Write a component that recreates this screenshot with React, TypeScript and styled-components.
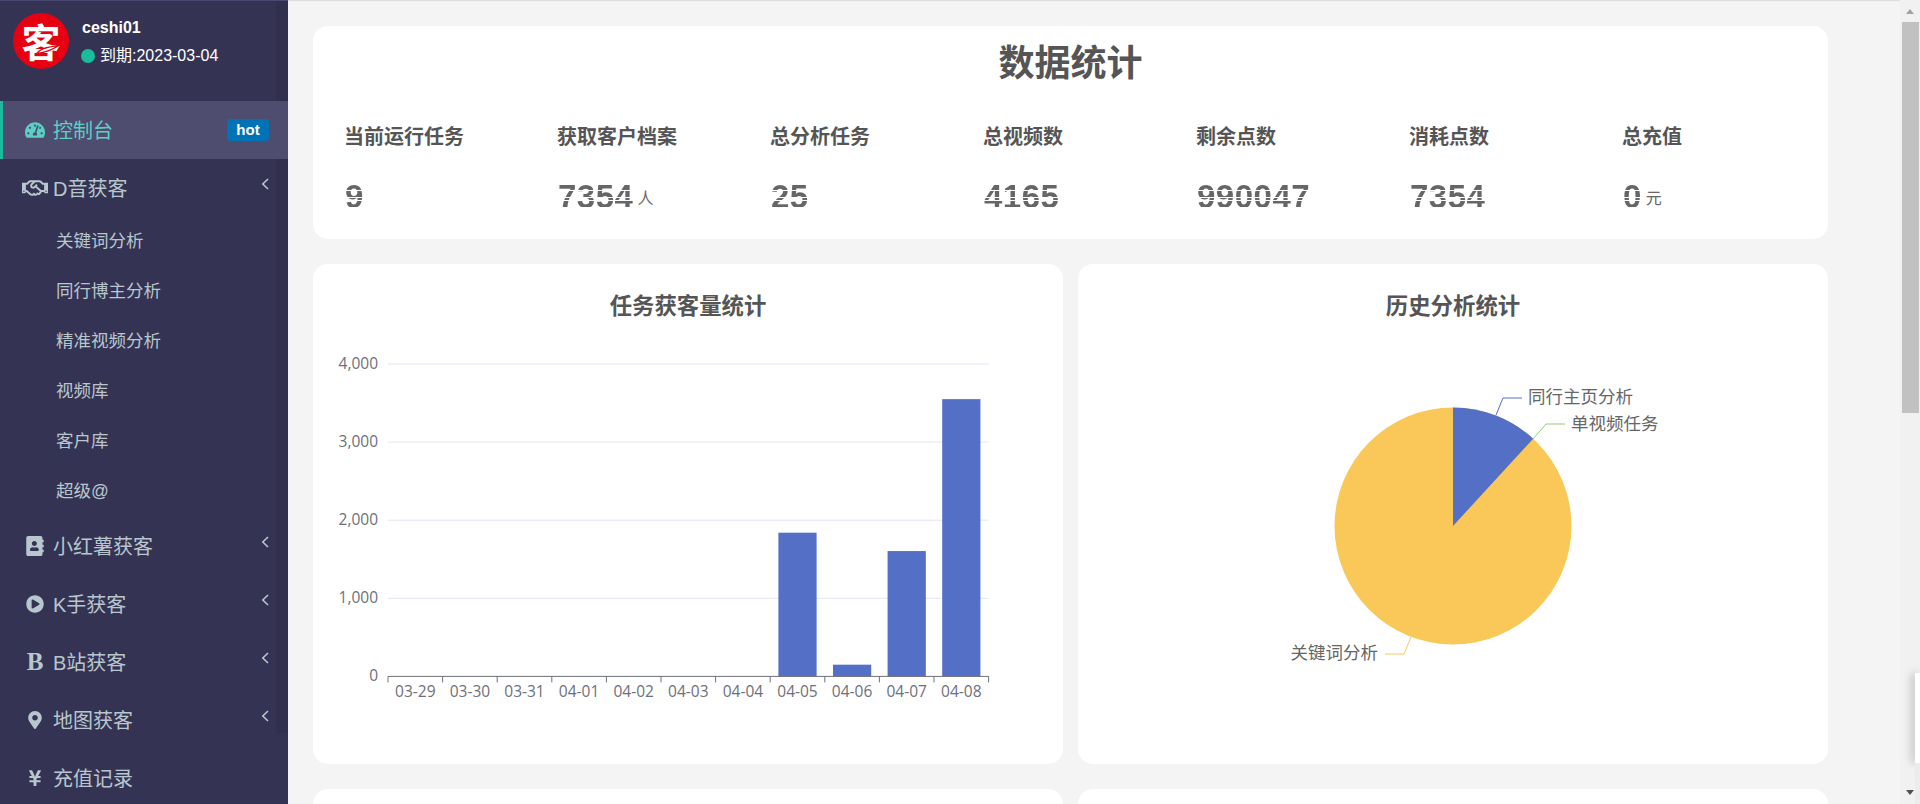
import styled, { createGlobalStyle } from "styled-components";
import {
  FaAddressBook,
  FaMapMarkerAlt,
  FaPlayCircle,
  FaRegHandshake,
  FaTachometerAlt,
  FaYenSign,
} from "react-icons/fa";

const FONT = `"Liberation Sans", "Noto Sans CJK SC", sans-serif`;
const CJK = `"Noto Sans CJK SC", "Open Sans", sans-serif`;
const CHART_FONT = `"Open Sans", "Noto Sans CJK SC", sans-serif`;

const stats = [
  { label: "当前运行任务", value: "9" },
  { label: "获取客户档案", value: "7354", unit: "人" },
  { label: "总分析任务", value: "25" },
  { label: "总视频数", value: "4165" },
  { label: "剩余点数", value: "990047" },
  { label: "消耗点数", value: "7354" },
  { label: "总充值", value: "0", unit: "元" },
];

const days = ["03-29", "03-30", "03-31", "04-01", "04-02", "04-03", "04-04", "04-05", "04-06", "04-07", "04-08"];
const bars = [0, 0, 0, 0, 0, 0, 0, 1840, 150, 1605, 3550];

const subMenu = ["关键词分析", "同行博主分析", "精准视频分析", "视频库", "客户库", "超级@"];

const GlobalStyle = createGlobalStyle`
  html, body {
    margin: 0;
    height: 100%;
    overflow: hidden;
    background: #f4f4f4;
    font-family: ${FONT};
  }
`;

const Page = styled.div`
  display: grid;
  grid-template-columns: 288px 1fr 20px;
  height: 100vh;
  overflow: hidden;
`;

const Sidebar = styled.aside`
  position: relative;
  background: #353353;
  border-top: 1px solid #4a4870;
  box-sizing: border-box;
  overflow: hidden;

  &::after {
    content: "";
    position: absolute;
    top: 0;
    right: 0;
    width: 12px;
    height: 733px;
    border-radius: 0 0 4px 4px;
    background: rgba(0, 0, 0, 0.07);
  }
`;

const UserPanel = styled.div`
  display: flex;
  gap: 13px;
  height: 100px;
  padding: 12px 13px 0;
  box-sizing: border-box;
`;

const Avatar = styled.div`
  position: relative;
  flex: none;
  width: 56px;
  height: 56px;
  border-radius: 50%;
  background: #e60012;
  color: #fff;
  font-family: ${CJK};
  font-weight: 700;
  font-size: 39px;
  line-height: 55px;
  text-align: center;

  svg {
    position: absolute;
    left: 0;
    top: 0;
  }
`;

const UserInfo = styled.div`
  display: flex;
  flex-direction: column;
  color: #fff;
  font-size: 16px;
`;

const UserName = styled.div`
  font-weight: 700;
  line-height: 20px;
  margin-top: 5px;
`;

const Expire = styled.div`
  display: flex;
  align-items: center;
  gap: 5px;
  line-height: 20px;
  margin-top: 8px;
  margin-left: -1px;
`;

const StatusDot = styled.span`
  width: 14px;
  height: 14px;
  border-radius: 50%;
  background: #1abc9c;
`;

const MenuItem = styled.div<{ $active?: boolean }>`
  position: relative;
  z-index: 1;
  display: flex;
  align-items: center;
  height: 58px;
  padding: 0 19px 0 21px;
  font-size: 20px;
  color: ${(p) => (p.$active ? "#5ccfc5" : "#b8c7ce")};
  background: ${(p) => (p.$active ? "#4f4d6f" : "transparent")};
  box-shadow: ${(p) => (p.$active ? "inset 3px 0 0 #1abc9c" : "none")};
`;

const MenuIcon = styled.span`
  display: flex;
  justify-content: center;
  align-items: center;
  width: 28px;
  margin-right: 4px;
  font-size: 20px;
`;

const SerifB = styled.span`
  font-family: "Liberation Serif", serif;
  font-weight: 700;
  font-size: 25px;
  line-height: 20px;
`;

const MenuLabel = styled.span`
  flex: 1;
  margin-top: -2px;
`;

const ChevronSvg = styled.svg`
  flex: none;
  margin-top: -8px;
`;

const Chevron = () => (
  <ChevronSvg width="8" height="12" viewBox="0 0 8 12">
    <path d="M7 1L1.8 6L7 11" fill="none" stroke="currentColor" strokeWidth="1.6" />
  </ChevronSvg>
);

const HotBadge = styled.span`
  width: 42px;
  height: 22px;
  border-radius: 4px;
  background: #0073b7;
  color: #fff;
  font-size: 15px;
  font-weight: 700;
  line-height: 22px;
  text-align: center;
`;

const SubItem = styled.div`
  position: relative;
  z-index: 1;
  height: 50px;
  line-height: 48px;
  padding-left: 56px;
  font-size: 17.5px;
  color: #b8c7ce;
`;

const Main = styled.main`
  display: flex;
  flex-direction: column;
  gap: 25px;
  height: 100vh;
  box-sizing: border-box;
  padding: 26px 72px 0 25px;
  overflow: hidden;
  box-shadow: inset 0 2px 1px -1px #dcdcdc;
`;

const Card = styled.section`
  flex: none;
  background: #fff;
  border-radius: 15px;
`;

const StatsCard = styled(Card)`
  height: 213px;
`;

const StatsTitle = styled.h1`
  margin: 0;
  height: 72px;
  font-family: ${CJK};
  font-size: 36px;
  line-height: 68px;
  font-weight: 700;
  color: #555;
  text-align: center;
`;

const StatsGrid = styled.div`
  display: grid;
  grid-template-columns: repeat(7, 213px);
  padding: 24px 0 0 31px;
`;

const StatLabel = styled.div`
  font-family: ${CJK};
  font-size: 20px;
  font-weight: 700;
  line-height: 28px;
  color: #555;
`;

const StatValue = styled.div`
  display: flex;
  align-items: center;
  margin-top: 30px;
  height: 34px;
`;

const Digits = styled.span`
  margin-left: 1px;
  font-size: 33px;
  font-weight: 700;
  letter-spacing: 0.5px;
  line-height: 34px;
  color: transparent;
  background: linear-gradient(
    #666 0 10px,
    #fff 10px 11px,
    #666 11px 17px,
    #fff 17px 18px,
    #666 18px 20.5px,
    #fff 20.5px 21.5px,
    #666 21.5px 27.5px,
    #fff 27.5px 28.5px,
    #666 28.5px
  );
  background-clip: text;
  -webkit-background-clip: text;
`;

const Unit = styled.span`
  margin-left: 4px;
  font-family: ${CJK};
  font-size: 16px;
  color: #666;
`;

const ChartRow = styled.div`
  flex: none;
  display: grid;
  grid-template-columns: 1fr 1fr;
  gap: 15px;
`;

const ChartCard = styled(Card)`
  height: 500px;
`;

const ChartTitle = styled.h2`
  margin: 0;
  height: 56px;
  padding-top: 26px;
  box-sizing: border-box;
  font-family: ${CJK};
  font-size: 22.4px;
  line-height: 28px;
  font-weight: 700;
  color: #555;
  text-align: center;
`;

const ChartSvg = styled.svg`
  display: block;

  text {
    font-family: ${CHART_FONT};
    font-size: 15.5px;
    fill: #6e7079;
  }
`;

const PieLabel = styled.text`
  && {
    font-family: ${CJK};
    font-size: 17.5px;
    fill: #666;
  }
`;

const Scrollbar = styled.div`
  display: flex;
  flex-direction: column;
  align-items: center;
  background: #f1f1f1;
  height: 100vh;
`;

const ScrollUp = styled.div`
  margin-top: 9px;
  border: 4.5px solid transparent;
  border-top: 0;
  border-bottom: 5px solid #a3a3a3;
`;

const ScrollThumb = styled.div`
  width: 17px;
  height: 391px;
  margin-top: 8px;
  margin-left: 1px;
  background: #c1c1c1;
`;

const ScrollDown = styled.div`
  margin-top: auto;
  margin-bottom: 9px;
  border: 4.5px solid transparent;
  border-bottom: 0;
  border-top: 5px solid #505050;
`;

const SideWidget = styled.div`
  position: fixed;
  right: 0;
  top: 673px;
  width: 5px;
  height: 90px;
  background: #fff;
  box-shadow: -3px 0 8px rgba(0, 0, 0, 0.25);
`;

const SideWidgetFoot = styled.div`
  position: fixed;
  right: 0;
  top: 763px;
  width: 5px;
  bottom: 0;
  background: #ececec;
`;

const BarChart = () => {
  const left = 75;
  const top = 44;
  const unit = 78.1;
  const catWidth = 54.6;
  const base = top + unit * 4;
  return (
    <ChartSvg width={750} height={444}>
      {[4, 3, 2, 1, 0].map((n) => (
        <g key={n}>
          {n > 0 && <line x1={left} x2={left + catWidth * 11} y1={base - unit * n} y2={base - unit * n} stroke="#e0e6f1" />}
          <text x={left - 10} y={base - unit * n + 5} textAnchor="end">
            {n === 0 ? "0" : `${n},000`}
          </text>
        </g>
      ))}
      {bars.map((value, i) =>
        value > 0 ? (
          <rect
            key={days[i]}
            x={left + catWidth * i + catWidth * 0.15}
            y={base - (value / 1000) * unit}
            width={catWidth * 0.7}
            height={(value / 1000) * unit}
            fill="#5470c6"
          />
        ) : null
      )}
      <line x1={left} x2={left + catWidth * 11} y1={base} y2={base} stroke="#6e7079" />
      {days.map((day, i) => (
        <g key={day}>
          <line x1={left + catWidth * i} x2={left + catWidth * i} y1={base} y2={base + 6} stroke="#6e7079" />
          <text x={left + catWidth * (i + 0.5)} y={base + 21} textAnchor="middle">
            {day}
          </text>
        </g>
      ))}
      <line x1={left + catWidth * 11} x2={left + catWidth * 11} y1={base} y2={base + 6} stroke="#6e7079" />
    </ChartSvg>
  );
};

const PieChart = () => {
  // offsets inside the card
  const cx = 375;
  const cy = 206;
  const r = 118.5;
  const angle = (42.6 * Math.PI) / 180;
  const ex = cx + r * Math.sin(angle);
  const ey = cy - r * Math.cos(angle);
  return (
    <ChartSvg width={750} height={444}>
      <circle cx={cx} cy={cy} r={r} fill="#fac858" />
      <path d={`M${cx} ${cy}L${cx} ${cy - r}A${r} ${r} 0 0 1 ${ex} ${ey}Z`} fill="#5470c6" />
      <polyline points="418,95 425,78 444,78" fill="none" stroke="#5470c6" />
      <polyline points="455,119 468,104 487,104" fill="none" stroke="#91cc75" />
      <polyline points="333,317 326,334 307,334" fill="none" stroke="#fac858" />
      <PieLabel x={450} y={82.5}>同行主页分析</PieLabel>
      <PieLabel x={493} y={109.5}>单视频任务</PieLabel>
      <PieLabel x={212.5} y={339}>关键词分析</PieLabel>
    </ChartSvg>
  );
};

const App = () => {
  return (
    <Page>
      <GlobalStyle />
      <Sidebar>
        <UserPanel>
          <Avatar>
            客
            <svg width="56" height="56" viewBox="0 0 56 56">
              <path d="M24 40c6 1 18-5 21-7-6 0-17 2-21 7z" fill="none" stroke="#e60012" strokeWidth="1.2" />
            </svg>
          </Avatar>
          <UserInfo>
            <UserName>ceshi01</UserName>
            <Expire>
              <StatusDot />
              到期:2023-03-04
            </Expire>
          </UserInfo>
        </UserPanel>
        <MenuItem $active>
          <MenuIcon><FaTachometerAlt /></MenuIcon>
          <MenuLabel>控制台</MenuLabel>
          <HotBadge>hot</HotBadge>
        </MenuItem>
        <MenuItem>
          <MenuIcon><FaRegHandshake size={26} /></MenuIcon>
          <MenuLabel>D音获客</MenuLabel>
          <Chevron />
        </MenuItem>
        {subMenu.map((name) => (
          <SubItem key={name}>{name}</SubItem>
        ))}
        <MenuItem>
          <MenuIcon><FaAddressBook /></MenuIcon>
          <MenuLabel>小红薯获客</MenuLabel>
          <Chevron />
        </MenuItem>
        <MenuItem>
          <MenuIcon><FaPlayCircle size={18} /></MenuIcon>
          <MenuLabel>K手获客</MenuLabel>
          <Chevron />
        </MenuItem>
        <MenuItem>
          <MenuIcon><SerifB>B</SerifB></MenuIcon>
          <MenuLabel>B站获客</MenuLabel>
          <Chevron />
        </MenuItem>
        <MenuItem>
          <MenuIcon><FaMapMarkerAlt size={18} /></MenuIcon>
          <MenuLabel>地图获客</MenuLabel>
          <Chevron />
        </MenuItem>
        <MenuItem>
          <MenuIcon><FaYenSign size={18} /></MenuIcon>
          <MenuLabel>充值记录</MenuLabel>
        </MenuItem>
      </Sidebar>

      <Main>
        <StatsCard>
          <StatsTitle>数据统计</StatsTitle>
          <StatsGrid>
            {stats.map((s) => (
              <div key={s.label}>
                <StatLabel>{s.label}</StatLabel>
                <StatValue>
                  <Digits>{s.value}</Digits>
                  {s.unit && <Unit>{s.unit}</Unit>}
                </StatValue>
              </div>
            ))}
          </StatsGrid>
        </StatsCard>
        <ChartRow>
          <ChartCard>
            <ChartTitle>任务获客量统计</ChartTitle>
            <BarChart />
          </ChartCard>
          <ChartCard>
            <ChartTitle>历史分析统计</ChartTitle>
            <PieChart />
          </ChartCard>
        </ChartRow>
        <ChartRow>
          <ChartCard />
          <ChartCard />
        </ChartRow>
      </Main>

      <Scrollbar>
        <ScrollUp />
        <ScrollThumb />
        <ScrollDown />
      </Scrollbar>
      <SideWidget />
      <SideWidgetFoot />
    </Page>
  );
};

export default App;
